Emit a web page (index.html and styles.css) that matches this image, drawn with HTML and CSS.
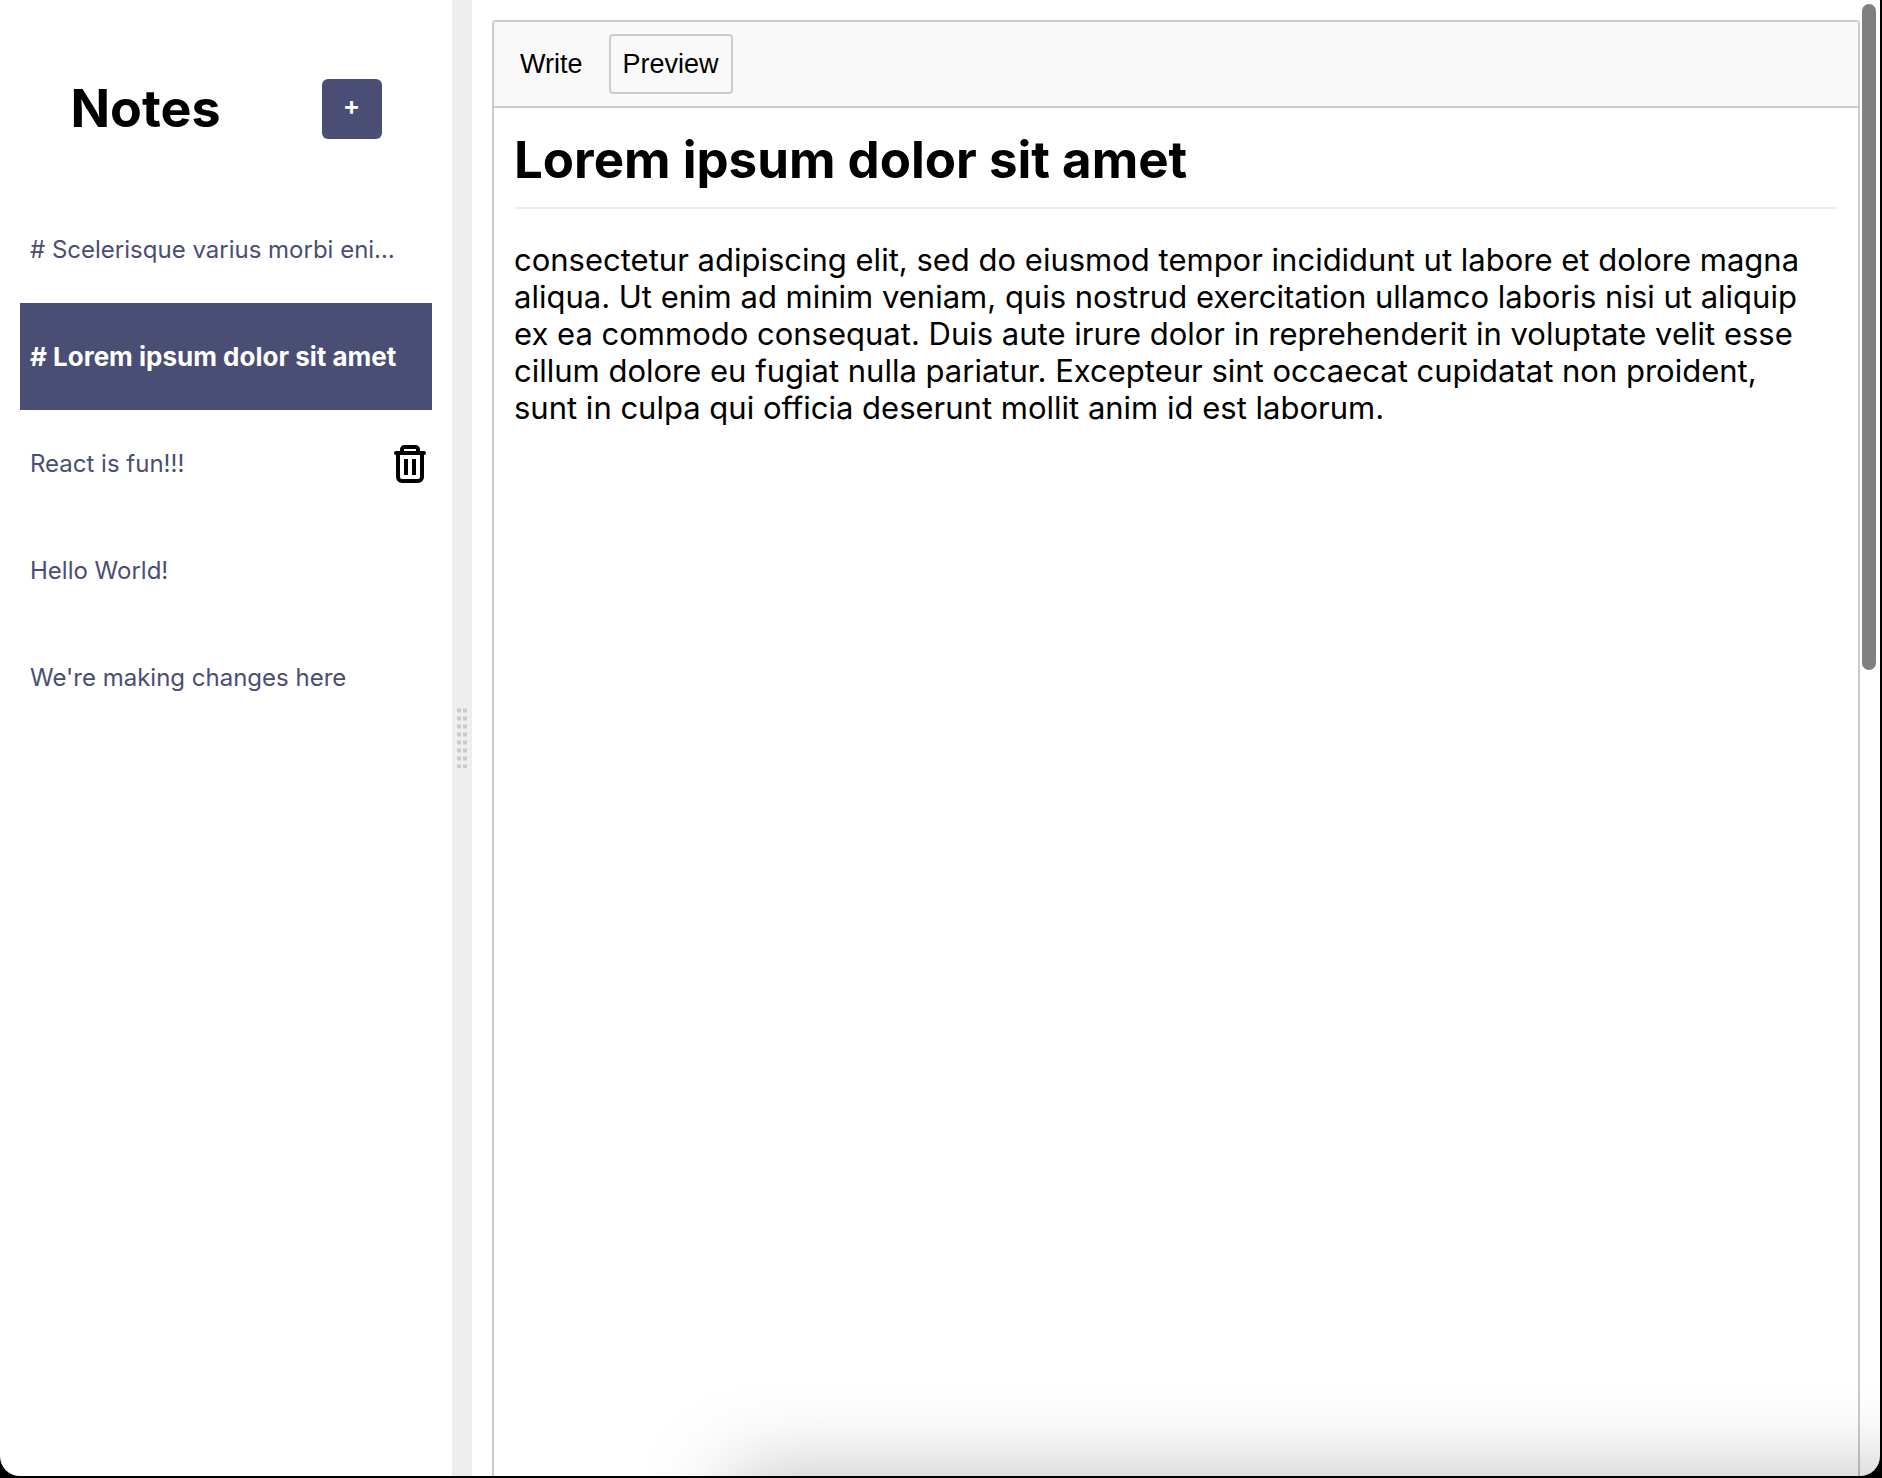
FILE: index.html
```html
<!DOCTYPE html>
<html lang="en">
<head>
<meta charset="utf-8">
<title>Notes</title>
<meta name="viewport" content="width=device-width, initial-scale=1">
<link rel="stylesheet" href="styles.css">
</head>
<body>
<div class="window">
  <aside class="sidebar">
    <header class="sidebar-header">
      <h1 class="sidebar-title">Notes</h1>
      <button class="new-note" type="button" aria-label="New note">+</button>
    </header>
    <ul class="note-list">
      <li class="note"><button class="note-title" type="button"># Scelerisque varius morbi eni…</button></li>
      <li class="note note-selected"><button class="note-title" type="button"># Lorem ipsum dolor sit amet</button></li>
      <li class="note">
        <button class="note-title" type="button">React is fun!!!</button>
        <button class="note-delete" type="button" aria-label="Delete note">
          <svg width="32" height="38" viewBox="0 0 32 38" fill="none" stroke="#000" stroke-width="4" stroke-linejoin="round" stroke-linecap="round">
            <path d="M2 8H30M4 8V32a4 4 0 0 0 4 4H24a4 4 0 0 0 4-4V8M8 8V4.500a2.500 2.500 0 0 1 2.500-2.500H21.500a2.500 2.500 0 0 1 2.500 2.500V8"/>
            <path d="M12 14V30M20 14V30" stroke-linecap="butt"/>
          </svg>
        </button>
      </li>
      <li class="note"><button class="note-title" type="button">Hello World!</button></li>
      <li class="note"><button class="note-title" type="button">We're making changes here</button></li>
    </ul>
  </aside>
  <div class="gutter" role="separator" aria-orientation="vertical">
    <svg width="10" height="60" viewBox="0 0 10 60" fill="none" stroke-width="4">
      <path d="M2 0V60M8 0V60" stroke="#dcdcdc" stroke-dasharray="5 3"/>
      <path d="M2 1V60M8 1V60" stroke="#cbcbcb" stroke-dasharray="3 5"/>
    </svg>
  </div>
  <main class="pane">
    <section class="editor">
      <div class="toolbar">
        <button class="tab" type="button">Write</button>
        <button class="tab tab-active" type="button">Preview</button>
      </div>
      <article class="preview">
        <h1 class="preview-title">Lorem ipsum dolor sit amet</h1>
        <p class="preview-text">consectetur adipiscing elit, sed do eiusmod tempor incididunt ut labore et dolore magna aliqua. Ut enim ad minim veniam, quis nostrud exercitation ullamco laboris nisi ut aliquip ex ea commodo consequat. Duis aute irure dolor in reprehenderit in voluptate velit esse cillum dolore eu fugiat nulla pariatur. Excepteur sint occaecat cupidatat non proident,<br>sunt in culpa qui officia deserunt mollit anim id est laborum.</p>
      </article>
    </section>
  </main>
  <div class="scroll-thumb"></div>
  <div class="dock-shadow"></div>
</div>
</body>
</html>
```

FILE: styles.css
```css
* {
  box-sizing: border-box;
}

body {
  margin: 0;
  padding: 0 2px 2px 0;
  background: #000;
  color: #000;
  font-family: Inter, sans-serif;
}

button {
  margin: 0;
  border: 0;
  background: none;
  color: inherit;
  font: inherit;
  cursor: pointer;
}

svg {
  display: block;
}

.window {
  position: relative;
  display: flex;
  height: calc(100vh - 2px);
  overflow: hidden;
  border-radius: 0 0 20px 20px;
  background: #fff;
}

.sidebar {
  flex: 0 0 452px;
  padding: 0 20px;
}

.sidebar-header {
  display: flex;
  align-items: center;
  justify-content: space-around;
  height: 196px;
  padding-top: 22px;
}

.sidebar-title {
  margin: 0;
  font-size: 52px;
  line-height: 60px;
}

.new-note {
  width: 60px;
  height: 60px;
  padding: 0 0 8px;
  border-radius: 6px;
  background: #4a4e74;
  color: #fff;
  font-size: 26px;
  font-weight: 600;
}

.note-list {
  margin: 0;
  padding: 0;
  list-style: none;
}

.note {
  display: flex;
  align-items: center;
  justify-content: space-between;
  height: 107px;
  padding: 0 6px 0 10px;
  color: #4a4e74;
  font-size: 24px;
}

.note-selected {
  background: #4a4e74;
  color: #fff;
  font-size: 26px;
  font-weight: 700;
}

.note-title {
  max-width: 372px;
  padding: 0;
  line-height: 32px;
  text-align: left;
  white-space: nowrap;
}

.note-delete {
  padding: 0;
}

.gutter {
  display: flex;
  flex: 0 0 20px;
  align-items: center;
  justify-content: center;
  background: #eee;
  cursor: col-resize;
}

.pane {
  flex: 1;
  min-width: 0;
  padding: 20px 20px 0;
}

.editor {
  height: 100%;
  border: 2px solid #c8ccd0;
  border-bottom: 0;
  border-radius: 4px 4px 0 0;
}

.toolbar {
  display: flex;
  gap: 12px;
  padding: 12px;
  border-bottom: 2px solid #c8ccd0;
  background: #f9f9f9;
}

.tab {
  height: 60px;
  padding: 0 12px;
  border: 2px solid transparent;
  border-radius: 4px;
  font-family: "Liberation Sans", Arial, sans-serif;
  font-size: 27px;
}

.tab-active {
  border-color: #c8ccd0;
}

.preview {
  padding: 20px;
}

.preview-title {
  margin: 0 0 32px;
  padding-bottom: 16px;
  border-bottom: 2px solid #eee;
  font-size: 51px;
  line-height: 63px;
}

.preview-text {
  margin: 0;
  font-size: 31px;
  line-height: 37px;
}

.scroll-thumb {
  position: absolute;
  top: 4px;
  right: 4px;
  width: 14px;
  height: 666px;
  border-radius: 7px;
  background: #808080;
}

.dock-shadow {
  position: absolute;
  top: 100%;
  right: -200px;
  left: 730px;
  height: 200px;
  box-shadow: 0 0 90px rgba(0, 0, 0, 0.26);
  pointer-events: none;
}
```
